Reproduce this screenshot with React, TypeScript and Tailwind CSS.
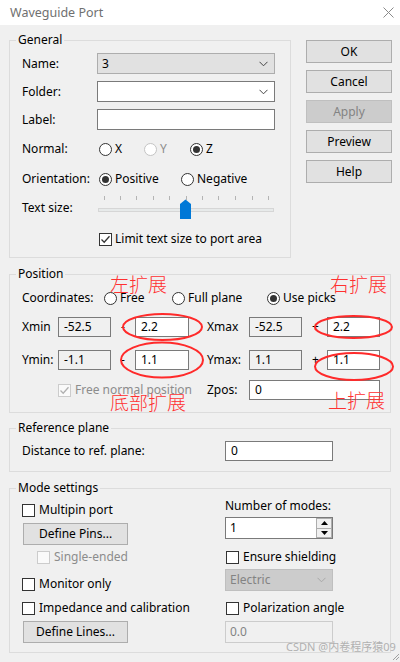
import React from "react";

function Chevron({ color = "#444" }: { color?: string }) {
  return (
    <svg width="9" height="6" viewBox="0 0 9 6" className="block">
      <path d="M0.5 0.8 L4.5 4.8 L8.5 0.8" fill="none" stroke={color} strokeWidth="1" />
    </svg>
  );
}

function Radio({ checked = false, disabled = false, label }: { checked?: boolean; disabled?: boolean; label: string }) {
  return (
    <span className="flex items-center">
      <span
        className={
          "w-[13px] h-[13px] rounded-full border bg-white flex items-center justify-center " +
          (disabled ? "border-[#c4c4c4]" : "border-[#333333]")
        }
      >
        {checked && <span className="w-[7px] h-[7px] rounded-full bg-[#333333]" />}
      </span>
      <span className={"ml-[3px] " + (disabled ? "text-[#8c8c8c]" : "")}>{label}</span>
    </span>
  );
}

function Check({ checked = false, disabled = false }: { checked?: boolean; disabled?: boolean }) {
  return (
    <span
      className={
        "w-[13px] h-[13px] border flex items-center justify-center shrink-0 " +
        (disabled ? "border-[#cccccc] bg-[#fafafa]" : "border-[#333333] bg-white")
      }
    >
      {checked && (
        <svg width="11" height="11" viewBox="0 0 11 11">
          <path
            d="M1.5 5.5 L4.2 8.2 L9.5 2.2"
            fill="none"
            stroke={disabled ? "#b0b0b0" : "#333333"}
            strokeWidth="1.3"
          />
        </svg>
      )}
    </span>
  );
}

function CheckRow({
  label,
  checked = false,
  disabled = false,
  className = "",
}: {
  label: string;
  checked?: boolean;
  disabled?: boolean;
  className?: string;
}) {
  return (
    <div className={"flex items-center h-[16px] " + className}>
      <Check checked={checked} disabled={disabled} />
      <span className={"ml-[4px] whitespace-nowrap " + (disabled ? "text-[#8c8c8c]" : "")}>{label}</span>
    </div>
  );
}

function Btn({ label, disabled = false, className = "" }: { label: string; disabled?: boolean; className?: string }) {
  return (
    <div
      className={
        "flex items-center justify-center border " +
        (disabled ? "bg-[#cccccc] border-[#bfbfbf] text-[#838383]" : "bg-[#e1e1e1] border-[#adadad]") +
        " " +
        className
      }
    >
      {label}
    </div>
  );
}

function Field({
  value,
  readOnly = false,
  className = "",
}: {
  value: string;
  readOnly?: boolean;
  className?: string;
}) {
  return (
    <div
      className={
        "h-[20px] border border-[#7a7a7a] flex items-center pl-[5px] " +
        (readOnly ? "bg-[#f0f0f0]" : "bg-white") +
        " " +
        className
      }
    >
      {value}
    </div>
  );
}

function Legend({ children }: { children: React.ReactNode }) {
  return <legend className="ml-[6px] px-[2px] leading-[16px]">{children}</legend>;
}

export default function App() {
  const ticks = [6, 22, 38, 55, 71, 88, 104, 120, 137, 154, 170];
  return (
    <div className="w-[400px] h-[662px] bg-[#f0f0f0] relative overflow-hidden font-['Noto_Sans','Noto_Sans_CJK_SC',sans-serif] text-[12px] leading-[16px] text-black">
      {/* Title bar */}
      <div className="h-[25px] bg-white flex items-center justify-between pl-[10px] pr-[5px]">
        <span className="text-[12.5px] text-[#707070]">Waveguide Port</span>
        <svg width="11" height="11" viewBox="0 0 11 11" className="mr-[1px]">
          <path d="M0.5 0.5 L10.5 10.5 M10.5 0.5 L0.5 10.5" stroke="#8a8a8a" strokeWidth="1" />
        </svg>
      </div>

      <div className="pl-[9px]">
        {/* Top: General + buttons */}
        <div className="flex mt-[7px]">
          <fieldset className="w-[282px] border border-[#dcdcdc]">
            <Legend>General</Legend>
            <div className="pl-[12px] pr-[15px] pt-[5px] pb-[8px] flex flex-col">
              <div className="flex items-center h-[21px]">
                <span className="w-[75px]">Name:</span>
                <div className="w-[178px] h-[21px] border border-[#adadad] bg-[#e1e1e1] flex items-center justify-between pl-[4px] pr-[6px]">
                  <span>3</span>
                  <Chevron />
                </div>
              </div>
              <div className="flex items-center h-[21px] mt-[7px]">
                <span className="w-[75px]">Folder:</span>
                <div className="w-[178px] h-[21px] border border-[#7a7a7a] bg-white flex items-center justify-end pr-[6px]">
                  <Chevron />
                </div>
              </div>
              <div className="flex items-center h-[21px] mt-[7px]">
                <span className="w-[75px]">Label:</span>
                <div className="w-[178px] h-[21px] border border-[#7a7a7a] bg-white" />
              </div>
              <div className="flex items-center h-[20px] mt-[9px]">
                <span className="w-[77px]">Normal:</span>
                <span className="w-[45px]">
                  <Radio label="X" />
                </span>
                <span className="w-[46px]">
                  <Radio label="Y" disabled />
                </span>
                <Radio label="Z" checked />
              </div>
              <div className="flex items-center h-[20px] mt-[10px]">
                <span className="w-[77px]">Orientation:</span>
                <span className="w-[82px]">
                  <Radio label="Positive" checked />
                </span>
                <Radio label="Negative" />
              </div>
              <div className="flex items-center h-[26px] mt-[6px]">
                <span className="w-[76px]">Text size:</span>
                <svg width="177" height="26" viewBox="0 0 177 26" className="block">
                  {ticks.map((t) => (
                    <line key={t} x1={t + 0.5} y1="1" x2={t + 0.5} y2="5" stroke="#b4b4b4" strokeWidth="1" />
                  ))}
                  <rect x="0.5" y="13.5" width="175" height="3" fill="#e7eaea" stroke="#d6d6d6" />
                  <polygon points="82,9 87.5,4.5 93,9 93,24 82,24" fill="#0078d7" />
                </svg>
              </div>
              <div className="flex items-center h-[20px] mt-[8px] pl-[77px]">
                <Check checked />
                <span className="ml-[3px] whitespace-nowrap">Limit text size to port area</span>
              </div>
            </div>
          </fieldset>

          <div className="ml-[15px] mt-[8px] flex flex-col gap-[7px]">
            <Btn label="OK" className="w-[86px] h-[23px]" />
            <Btn label="Cancel" className="w-[86px] h-[23px]" />
            <Btn label="Apply" disabled className="w-[86px] h-[23px]" />
            <Btn label="Preview" className="w-[86px] h-[23px]" />
            <Btn label="Help" className="w-[86px] h-[23px]" />
          </div>
        </div>

        {/* Position */}
        <fieldset className="w-[382px] border border-[#dcdcdc] mt-[8px]">
          <Legend>Position</Legend>
          <div className="pl-[12px] pt-[6px] pb-[12px] flex flex-col">
            <div className="flex items-center h-[20px]">
              <span className="w-[82px]">Coordinates:</span>
              <span className="w-[68px]">
                <Radio label="Free" />
              </span>
              <span className="w-[95px]">
                <Radio label="Full plane" />
              </span>
              <Radio label="Use picks" checked />
            </div>
            <div className="flex items-center h-[20px] mt-[9px]">
              <span className="w-[36px]">Xmin</span>
              <Field value="-52.5" readOnly className="w-[53px]" />
              <span className="w-[24px] pl-[10px]">-</span>
              <Field value="2.2" className="w-[54px]" />
              <span className="w-[18px]" />
              <span className="w-[42px]">Xmax</span>
              <Field value="-52.5" readOnly className="w-[53px]" />
              <span className="w-[25px] pl-[10px]">+</span>
              <Field value="2.2" className="w-[53px]" />
            </div>
            <div className="flex items-center h-[20px] mt-[13px]">
              <span className="w-[36px]">Ymin:</span>
              <Field value="-1.1" readOnly className="w-[53px]" />
              <span className="w-[24px] pl-[10px]">-</span>
              <Field value="1.1" className="w-[54px]" />
              <span className="w-[18px]" />
              <span className="w-[42px]">Ymax:</span>
              <Field value="1.1" readOnly className="w-[53px]" />
              <span className="w-[25px] pl-[10px]">+</span>
              <Field value="1.1" className="w-[53px]" />
            </div>
            <div className="flex items-center h-[20px] mt-[10px]">
              <div className="w-[185px] pl-[36px]">
                <CheckRow label="Free normal position" checked disabled />
              </div>
              <span className="w-[42px]">Zpos:</span>
              <Field value="0" className="w-[131px]" />
            </div>
          </div>
        </fieldset>

        {/* Reference plane */}
        <fieldset className="w-[382px] border border-[#dcdcdc] mt-[7px]">
          <Legend>Reference plane</Legend>
          <div className="pl-[12px] pt-[5px] pb-[10px] flex items-center">
            <span className="w-[203px]">Distance to ref. plane:</span>
            <Field value="0" className="w-[108px]" />
          </div>
        </fieldset>

        {/* Mode settings */}
        <fieldset className="w-[382px] border border-[#dcdcdc] mt-[8px]">
          <Legend>Mode settings</Legend>
          <div className="pl-[12px] pb-[9px] flex">
            <div className="w-[203px] flex flex-col">
              <CheckRow label="Multipin port" className="mt-[6px]" />
              <Btn label="Define Pins..." className="mt-[5px] ml-[1px] w-[105px] h-[22px]" />
              <CheckRow label="Single-ended" disabled className="mt-[4px] pl-[15px]" />
              <CheckRow label="Monitor only" className="mt-[11px]" />
              <CheckRow label="Impedance and calibration" className="mt-[8px]" />
              <Btn label="Define Lines..." className="mt-[5px] ml-[1px] w-[105px] h-[22px]" />
            </div>
            <div className="w-[108px] flex flex-col">
              <div className="mt-[2px] h-[16px] flex items-center whitespace-nowrap">Number of modes:</div>
              <div className="mt-[3px] h-[22px] border border-[#7a7a7a] bg-white flex items-stretch">
                <span className="flex-1 flex items-center pl-[4px]">1</span>
                <div className="w-[16px] flex flex-col">
                  <div className="flex-1 border border-[#adadad] bg-[#f0f0f0] flex items-center justify-center">
                    <svg width="7" height="4" viewBox="0 0 7 4">
                      <polygon points="0,4 3.5,0 7,4" fill="#000" />
                    </svg>
                  </div>
                  <div className="flex-1 border border-t-0 border-[#adadad] bg-[#f0f0f0] flex items-center justify-center">
                    <svg width="7" height="4" viewBox="0 0 7 4">
                      <polygon points="0,0 7,0 3.5,4" fill="#000" />
                    </svg>
                  </div>
                </div>
              </div>
              <CheckRow label="Ensure shielding" className="mt-[10px] pl-[1px]" />
              <div className="mt-[4px] h-[22px] border border-[#bfbfbf] bg-[#cccccc] text-[#838383] flex items-center justify-between pl-[4px] pr-[6px]">
                <span>Electric</span>
                <Chevron color="#a8a8a8" />
              </div>
              <CheckRow label="Polarization angle" className="mt-[9px] pl-[1px]" />
              <div className="mt-[5px] h-[22px] border border-[#cccccc] bg-[#f0f0f0] text-[#838383] flex items-center pl-[4px]">
                0.0
              </div>
            </div>
          </div>
        </fieldset>
      </div>

      {/* Annotation overlays */}
      <svg width="400" height="662" className="absolute left-0 top-0 pointer-events-none">
        <g fill="none" stroke="#ff2a2a" strokeWidth="2">
          <ellipse cx="162.5" cy="327" rx="39.5" ry="13" />
          <ellipse cx="162" cy="360" rx="41" ry="17.5" />
          <ellipse cx="353.5" cy="327" rx="38.5" ry="11" />
          <ellipse cx="354" cy="366.5" rx="39" ry="13.5" />
        </g>
        <path d="M393 660 L399 654 M396 660 L399 657" stroke="#a0a0a0" strokeWidth="1" />
      </svg>
      <span className="absolute left-[110px] top-[274px] text-[19px] leading-[19px] text-[#ff3030] font-['Noto_Sans_CJK_SC',sans-serif] font-light">
        左扩展
      </span>
      <span className="absolute left-[330px] top-[274px] text-[19px] leading-[19px] text-[#ff3030] font-['Noto_Sans_CJK_SC',sans-serif] font-light">
        右扩展
      </span>
      <span className="absolute left-[110px] top-[392px] text-[19px] leading-[19px] text-[#ff3030] font-['Noto_Sans_CJK_SC',sans-serif] font-light">
        底部扩展
      </span>
      <span className="absolute left-[328px] top-[390px] text-[19px] leading-[19px] text-[#ff3030] font-['Noto_Sans_CJK_SC',sans-serif] font-light">
        上扩展
      </span>
      <span className="absolute left-[286px] top-[640px] text-[11px] leading-[14px] text-[#b0b0b0] font-['Noto_Sans','Noto_Sans_CJK_SC',sans-serif]">
        CSDN @内卷程序猿09
      </span>
    </div>
  );
}
